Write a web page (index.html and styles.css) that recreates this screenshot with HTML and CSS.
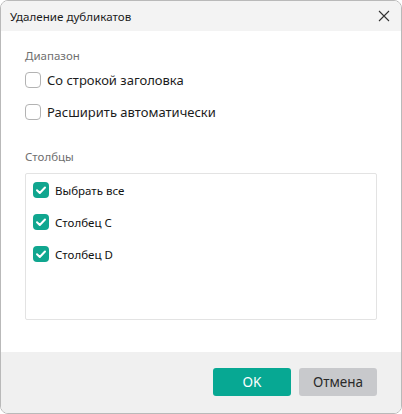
FILE: index.html
```html
<!DOCTYPE html>
<html>
<head lang="ru">
    <meta charset="UTF-8">
    <title>Удаление дубликатов</title>
    <link rel="stylesheet" href="styles.css">
</head>
<body>
<div class="dialog">
    <div class="head">
        <span class="title">Удаление дубликатов</span>
        <svg class="close" width="12" height="12" viewBox="0 0 12 12">
            <path d="M1 1L11 11M11 1L1 11" stroke="#333" stroke-width="1.1" fill="none"/>
        </svg>
    </div>
    <div class="main">
        <div class="label">Диапазон</div>
        <div class="opt">
            <span class="box"></span>
            <span>Со строкой заголовка</span>
        </div>
        <div class="opt">
            <span class="box"></span>
            <span>Расширить автоматически</span>
        </div>
        <div class="label cols">Столбцы</div>
        <div class="list">
            <div class="item">
                <span class="box on"><svg width="16" height="16" viewBox="0 0 16 16"><path d="M4 8.2L6.8 11L12 5.5" stroke="#fff" stroke-width="2" fill="none" stroke-linecap="round" stroke-linejoin="round"/></svg></span>
                <span>Выбрать все</span>
            </div>
            <div class="item">
                <span class="box on"><svg width="16" height="16" viewBox="0 0 16 16"><path d="M4 8.2L6.8 11L12 5.5" stroke="#fff" stroke-width="2" fill="none" stroke-linecap="round" stroke-linejoin="round"/></svg></span>
                <span>Столбец C</span>
            </div>
            <div class="item">
                <span class="box on"><svg width="16" height="16" viewBox="0 0 16 16"><path d="M4 8.2L6.8 11L12 5.5" stroke="#fff" stroke-width="2" fill="none" stroke-linecap="round" stroke-linejoin="round"/></svg></span>
                <span>Столбец D</span>
            </div>
        </div>
    </div>
    <div class="foot">
        <button class="btn ok">OK</button>
        <button class="btn cancel">Отмена</button>
    </div>
</div>
</body>
</html>
```

FILE: styles.css
```css
* {
    margin: 0;
    padding: 0;
    box-sizing: border-box;
}

body {
    font-family: "Noto Sans", "Open Sans", sans-serif;
    color: #1c1c1c;
    background: #fff;
}

.dialog {
    width: 402px;
    height: 414px;
    border: 1px solid #b9b9b9;
    border-radius: 8px;
    overflow: hidden;
    display: flex;
    flex-direction: column;
    background: #fff;
}

.head {
    height: 30px;
    background: #f3f3f3;
    display: flex;
    align-items: center;
    justify-content: space-between;
    padding: 0 10px 0 9px;
}

.title {
    font-size: 11.6px;
}

.close {
    margin-right: 1px;
}

.main {
    flex: 1;
    padding: 17px 24px 0;
}

.label {
    font-size: 11.5px;
    line-height: 16px;
    color: #6f6f6f;
    margin-bottom: 8px;
}

.cols {
    margin-top: 29px;
}

.opt {
    display: flex;
    align-items: center;
    height: 16px;
    font-size: 13px;
    margin-bottom: 16px;
}

.opt:last-of-type {
    margin-bottom: 0;
}

.box {
    width: 16px;
    height: 16px;
    border: 1px solid #b3b3b3;
    border-radius: 4px;
    margin-right: 6px;
    flex-shrink: 0;
    background: #fff;
}

.box.on {
    border: none;
    background: #10a68f;
}

.box svg {
    display: block;
}

.list {
    height: 147px;
    border: 1px solid #e3e3e3;
    border-radius: 2px;
    padding: 8px 7px;
}

.item {
    display: flex;
    align-items: center;
    height: 16px;
    font-size: 11.5px;
    color: #111;
    margin-bottom: 16px;
}

.foot {
    height: 61px;
    background: #f0f0f0;
    display: flex;
    justify-content: flex-end;
    align-items: flex-start;
    padding: 16px 24px 0 0;
    gap: 8px;
}

.btn {
    width: 78px;
    height: 28px;
    border: none;
    border-radius: 3px;
    font-family: "Noto Sans", "Open Sans", sans-serif;
    font-size: 13.5px;
}

.ok {
    background: #07a893;
    color: #fff;
}

.cancel {
    background: #c8c9cc;
    color: #2a2a2a;
}
```
